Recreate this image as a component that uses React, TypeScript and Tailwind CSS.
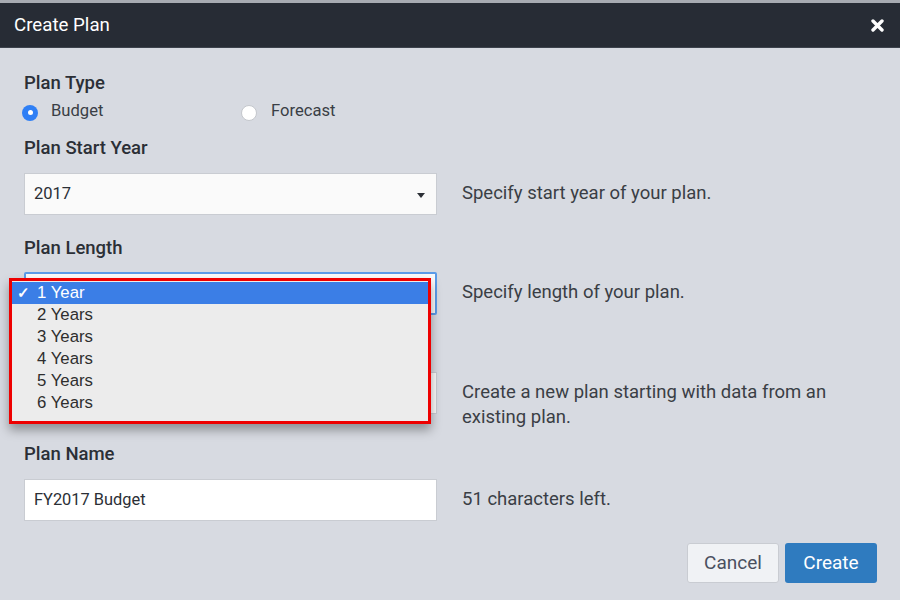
import { useState } from "react";

const lengths = ["1 Year", "2 Years", "3 Years", "4 Years", "5 Years", "6 Years"];

function Caret() {
  return (
    <svg width="8" height="5" viewBox="0 0 8 5" className="absolute right-[11px] top-[19px]">
      <path d="M0 0h8L4 5z" fill="#2b2f36" />
    </svg>
  );
}

function Radio({ checked }: { checked: boolean }) {
  return checked ? (
    <span className="flex h-4 w-4 items-center justify-center rounded-full bg-[#2f7ff5]">
      <span className="h-[5px] w-[5px] rounded-full bg-white" />
    </span>
  ) : (
    <span className="h-4 w-4 rounded-full border border-[#c4c7cc] bg-white" />
  );
}

function Label({ children, className = "" }: { children?: React.ReactNode; className?: string }) {
  return (
    <div className={`h-6 text-[18.5px] font-medium leading-6 text-[#2b2f36] ${className}`}>{children}</div>
  );
}

function Hint({ children }: { children: React.ReactNode }) {
  return <div className="pt-2 text-[18.5px] leading-[25px] text-[#3a3e45]">{children}</div>;
}

export default function App() {
  const [planType, setPlanType] = useState("budget");

  return (
    <div
      className="h-[600px] w-[900px] overflow-hidden bg-[#d7dae1]"
      style={{ fontFamily: "Roboto, 'Liberation Sans', sans-serif" }}
    >
      {/* header */}
      <div className="border-t-[3px] border-[#a7abb2] bg-[#272c35]">
        <div className="flex h-[45px] items-center justify-between border-b border-[#3d434d] pl-[14px] pr-[16px]">
          <span className="text-[18.7px] text-white">Create Plan</span>
          <svg width="13" height="13" viewBox="0 0 13 13">
            <path d="M2 2l9 9M11 2l-9 9" stroke="white" strokeWidth="3.4" strokeLinecap="round" />
          </svg>
        </div>
      </div>

      <div className="pl-[24px] pr-[23px] pt-[23px]">
        <Label>Plan Type</Label>
        <div className="mt-[6px] flex h-6 items-center text-[16.6px] text-[#3a3e45]">
          <button onClick={() => setPlanType("budget")} className="flex w-[217px] items-center gap-[13px]">
            <span className="-ml-[2px]">
              <Radio checked={planType === "budget"} />
            </span>
            <span className="-mt-[4px]">Budget</span>
          </button>
          <button onClick={() => setPlanType("forecast")} className="flex items-center gap-[14px]">
            <Radio checked={planType === "forecast"} />
            <span className="-mt-[4px]">Forecast</span>
          </button>
        </div>

        <Label className="mt-[11px]">Plan Start Year</Label>
        <div className="mt-[13px] flex h-[42px] items-start gap-[25px]">
          <div className="relative h-[42px] w-[413px] shrink-0 border border-[#c9ccd2] bg-[#fafafa] pl-[9px] text-[16.5px] leading-[40px] text-[#2b2f36]">
            2017
            <Caret />
          </div>
          <Hint>Specify start year of your plan.</Hint>
        </div>

        <Label className="mt-[21px]">Plan Length</Label>
        <div className="mt-[12px] flex h-[43px] items-start gap-[25px]">
          <div className="relative h-[43px] w-[413px] shrink-0 rounded-[2px] border-2 border-[#5b9be8] bg-[#fafafa]">
            {/* open native list */}
            <div className="absolute -left-[17px] top-[4px] z-10 w-[422px] border-[3px] border-[#ee0000] bg-[#ececec] pb-[7px] pt-[1px] shadow-[0_6px_10px_rgba(0,0,0,0.35)]">
              {lengths.map((item, i) => (
                <div
                  key={item}
                  className={`flex h-[22px] items-center text-[16.8px] ${
                    i === 0 ? "bg-[#3b7ee6] text-white" : "text-[#2e2e2e]"
                  }`}
                  style={{ fontFamily: "'Liberation Sans', Arial, sans-serif" }}
                >
                  <span className="w-[25px] pl-[5px] text-[15px] font-bold">{i === 0 ? "✓" : ""}</span>
                  {item}
                </div>
              ))}
            </div>
          </div>
          <Hint>Specify length of your plan.</Hint>
        </div>

        {/* label of this field is covered by the open list */}
        <Label className="mt-[20px]" />
        <div className="mt-[13px] flex h-[42px] items-start gap-[25px]">
          <div className="h-[42px] w-[413px] shrink-0 border border-[#c9ccd2] bg-[#fafafa]" />
          <Hint>
            Create a new plan starting with data from an
            <br />
            existing plan.
          </Hint>
        </div>

        <Label className="mt-[28px]">Plan Name</Label>
        <div className="mt-[13px] flex h-[42px] items-start gap-[25px]">
          <div className="h-[42px] w-[413px] shrink-0 border border-[#c9ccd2] bg-white pl-[9px] text-[16.4px] leading-[40px] text-[#2b2f36]">
            FY2017 Budget
          </div>
          <Hint>51 characters left.</Hint>
        </div>

        <div className="mt-[22px] flex justify-end gap-[6px]">
          <button className="h-[40px] w-[92px] rounded-[3px] border border-[#c9ccd2] bg-[#f0f2f5] text-[19px] text-[#4a5060]">
            Cancel
          </button>
          <button className="h-[40px] w-[92px] rounded-[3px] bg-[#2f7bbf] text-[19px] text-white">
            Create
          </button>
        </div>
      </div>
    </div>
  );
}
